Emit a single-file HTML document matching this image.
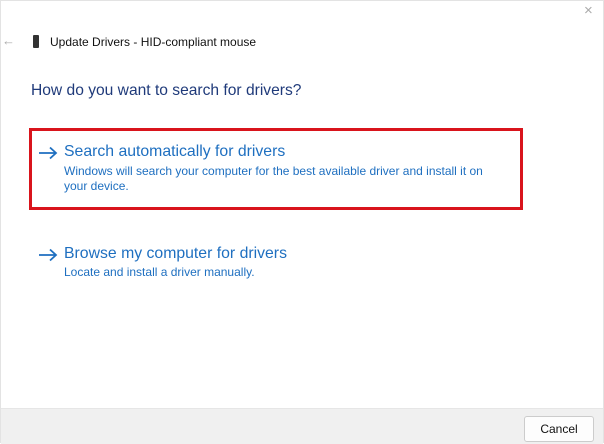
<!DOCTYPE html>
<html><head><style>
body{margin:0;width:604px;height:443px;background:#fff;font-family:"Liberation Sans",sans-serif;position:relative;overflow:hidden}
.a{position:absolute;white-space:nowrap}
.frame{position:absolute;left:0;top:0;width:602px;height:441px;border:1px solid #e3e3e3}
</style></head><body>
<div class="frame"></div>
<div class="a" style="left:584px;top:2px;color:#aaa;font-size:15px">×</div>
<div class="a" style="left:2px;top:33px;color:#aaa;font-size:13px">←</div>
<div class="a" style="left:33px;top:35px;width:6px;height:13px;background:#333;border-radius:1px"></div>
<div class="a" style="left:50px;top:35px;font-size:12px;color:#111">Update Drivers - HID-compliant mouse</div>
<div class="a" style="left:31px;top:82px;font-size:15.6px;color:#1f3a7a">How do you want to search for drivers?</div>
<div class="a" style="left:29px;top:128px;width:488px;height:76px;border:3px solid #d9141c"></div>
<svg class="a" style="left:38px;top:146px" width="20" height="14" viewBox="0 0 20 14"><path d="M1 7H18M12 1.5L18 7L12 12.5" fill="none" stroke="#1e6fc0" stroke-width="1.8"/></svg>
<div class="a" style="left:64px;top:143px;font-size:15.8px;color:#1e6fc0">Search automatically for drivers</div>
<div class="a" style="left:64px;top:164px;font-size:12px;line-height:15px;color:#1e6fc0">Windows will search your computer for the best available driver and install it on<br>your device.</div>
<svg class="a" style="left:38px;top:248px" width="20" height="14" viewBox="0 0 20 14"><path d="M1 7H18M12 1.5L18 7L12 12.5" fill="none" stroke="#1e6fc0" stroke-width="1.8"/></svg>
<div class="a" style="left:64px;top:245px;font-size:15.8px;color:#1e6fc0">Browse my computer for drivers</div>
<div class="a" style="left:64px;top:265px;font-size:12px;color:#1e6fc0">Locate and install a driver manually.</div>
<div class="a" style="left:1px;top:408px;width:602px;height:35px;background:#f0f0f0;border-top:1px solid #e6e6e6"></div>
<div class="a" style="left:524px;top:416px;width:68px;height:24px;background:#fdfdfd;border:1px solid #ccc;border-radius:3px;font-size:12px;text-align:center;line-height:24px;color:#111">Cancel</div>
</body></html>
